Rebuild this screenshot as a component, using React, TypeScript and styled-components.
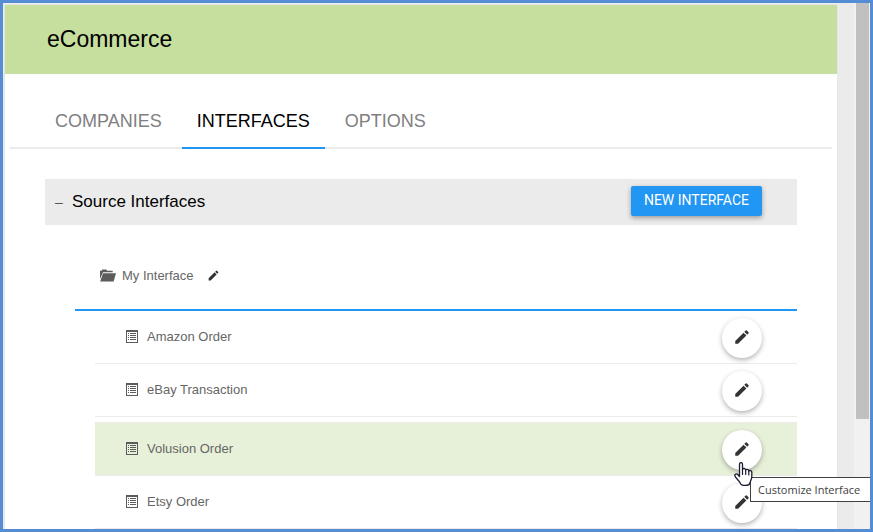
import React from 'react';
import styled, { createGlobalStyle } from 'styled-components';
import { MdEdit } from 'react-icons/md';

const GlobalStyle = createGlobalStyle`
  * { box-sizing: border-box; }
  body {
    margin: 0;
    background: #fff;
    font-family: "Liberation Sans", Arial, sans-serif;
  }
  button { font-family: inherit; border: 0; padding: 0; background: none; cursor: pointer; }
`;

const Frame = styled.div`
  display: flex;
  min-height: 100vh;
  border: 3px solid #548dd4;
  background: #ebebeb;
  overflow: hidden;
`;

const Page = styled.main`
  flex: 1;
  min-width: 0;
  margin: 2px 17px 0 2px;
  background: #fff;
  box-shadow: 0 0 1px #ccc;
`;

const ScrollTrack = styled.div`
  width: 16px;
  padding: 0 1px 0 2px;
  background: #f1f1f1;
`;

const ScrollThumb = styled.div`
  height: 79%;
  background: #c0c0c0;
`;

const Header = styled.header`
  display: flex;
  align-items: center;
  height: 69px;
  padding: 0 42px 2px;
  background: #c6df9f;
`;

const Title = styled.h1`
  margin: 0;
  font-size: 23px;
  line-height: 28px;
  font-weight: 400;
  color: #000;
`;

const Tabs = styled.nav`
  display: flex;
  gap: 5px;
  margin: 18px 5px 0;
  padding: 0 30px;
  box-shadow: inset 0 -2px #ebebeb;
`;

const Tab = styled.button<{ $active?: boolean }>`
  height: 57px;
  padding: 2px 15px 0;
  border-bottom: 2px solid ${(p) => (p.$active ? '#2196f3' : 'transparent')};
  font-size: 18px;
  line-height: 24px;
  color: ${(p) => (p.$active ? '#000' : '#808080')};
`;

const Section = styled.section`
  margin: 30px 40px 0;
`;

const SectionBar = styled.div`
  display: flex;
  align-items: center;
  justify-content: space-between;
  height: 46px;
  padding: 0 35px 2px 10px;
  background: #ebebeb;
`;

const SectionToggle = styled.button`
  display: flex;
  align-items: center;
  gap: 9px;
  padding-top: 2px;
  font-size: 17px;
  line-height: 20px;
  color: #000;
`;

const Dash = styled.span`
  width: 8px;
  font-size: 14px;
  color: #555;
`;

const PrimaryButton = styled.button`
  height: 30px;
  padding: 0 13px 2px;
  border-radius: 2px;
  background: #2196f3;
  color: #fff;
  font-family: Roboto, sans-serif;
  font-size: 14px;
  line-height: 20px;
  box-shadow: 0 2px 5px rgba(0, 0, 0, 0.35);
`;

const Group = styled.div`
  margin-left: 30px;
`;

const GroupHeader = styled.div`
  display: flex;
  align-items: center;
  height: 86px;
  padding: 16px 24px 0;
  border-bottom: 2px solid #2196f3;
  color: #666;
  font-size: 13px;
`;

const GroupName = styled.span`
  margin: 0 13px 0 6px;
`;

const SmallEdit = styled.button`
  display: flex;
  color: #333;
`;

const List = styled.ul`
  margin: 0 0 0 20px;
  padding: 0;
  list-style: none;
`;

const Row = styled.li<{ $highlighted?: boolean }>`
  display: flex;
  align-items: center;
  height: ${(p) => (p.$highlighted ? 54 : 53)}px;
  margin-top: ${(p) => (p.$highlighted ? 5 : 0)}px;
  padding: 0 35px 0 31px;
  border-top: ${(p) => (p.$highlighted ? '1px solid #ebebeb' : '0')};
  border-bottom: 1px solid #ebebeb;
  background: ${(p) => (p.$highlighted ? '#e7f1d9' : 'transparent')};
`;

const RowName = styled.span`
  flex: 1;
  margin-left: 9px;
  font-size: 13px;
  line-height: 18px;
  color: #666;
`;

const Action = styled.div`
  position: relative;
  padding-top: 2px;
`;

const RoundButton = styled.button`
  display: flex;
  justify-content: center;
  width: 40px;
  height: 40px;
  padding-top: 10px;
  border-radius: 50%;
  background: #fff;
  color: #333;
  box-shadow: 0 2px 5px rgba(0, 0, 0, 0.3);
`;

const Tooltip = styled.div`
  position: absolute;
  z-index: 2;
  left: 28px;
  top: 49px;
  padding: 4px 12px 3px 7px;
  border: 1px solid #404040;
  background: #fff;
  color: #404040;
  font-family: "Open Sans", "Noto Sans", sans-serif;
  font-size: 11px;
  line-height: 16px;
  white-space: nowrap;
`;

const Pointer = styled.svg`
  position: absolute;
  z-index: 3;
  left: 12px;
  top: 34px;
`;

const FolderIcon = () => (
  <svg width="17" height="13" viewBox="0 0 17 13" fill="#5c5c5c" aria-hidden="true">
    <path d="M1 10V1.8h1.5L3.2.5h4.2l.7 1.3h5.6v1.4H4L1 10Z" />
    <path d="M4 4.2H17l-2.4 8.3H1.2Z" />
  </svg>
);

const ListGlyph = styled.svg`
  margin-bottom: 2px;
`;

const ListIcon = () => (
  <ListGlyph width="12" height="13" viewBox="0 0 12 13" fill="#5c5c5c" aria-hidden="true">
    <path fillRule="evenodd" d="M0 0h12v13H0ZM1 2v10h10V2Z" />
    <path d="M2 3h1v1H2ZM4 3h6v1H4ZM2 5h1v1H2ZM4 5h6v1H4ZM2 7h1v1H2ZM4 7h6v1H4ZM2 9h1v1H2ZM4 9h6v1H4Z" />
  </ListGlyph>
);

const HandPointer = () => (
  <Pointer width="19" height="25" viewBox="0 0 19 25" aria-hidden="true">
    <path
      d="M5.5 14.5V2.4C5.5 0 8.5 0 8.5 2.4V7.4C9 6 11.5 6.2 11.7 8C12.4 6.9 14.6 7.3 14.8 9C15.6 8 17.8 8.5 17.8 10.3V15C17.8 17.4 16.2 18.7 16 21C15.3 24.3 6.9 24.2 6.1 20.8C5 18.5 1.1 15.7.8 13.7C.5 12 2.6 11.3 3.9 12.7Z"
      fill="#fff"
      stroke="#1c1c30"
      strokeWidth="1.3"
      strokeLinejoin="round"
    />
    <path d="M8.5 7v5.5M11.7 8v4.5M14.8 9v4" fill="none" stroke="#1c1c30" strokeWidth="1.2" strokeLinecap="round" />
  </Pointer>
);

const tabs = ['COMPANIES', 'INTERFACES', 'OPTIONS'];

const interfaces = [
  { name: 'Amazon Order' },
  { name: 'eBay Transaction' },
  { name: 'Volusion Order', highlighted: true },
  { name: 'Etsy Order' },
];

export default function App() {
  return (
    <>
      <GlobalStyle />
      <Frame>
        <Page>
          <Header>
            <Title>eCommerce</Title>
          </Header>
          <Tabs>
            {tabs.map((tab) => (
              <Tab key={tab} $active={tab === 'INTERFACES'}>{tab}</Tab>
            ))}
          </Tabs>
          <Section>
            <SectionBar>
              <SectionToggle aria-expanded="true">
                <Dash>–</Dash>
                Source Interfaces
              </SectionToggle>
              <PrimaryButton>NEW INTERFACE</PrimaryButton>
            </SectionBar>
            <Group>
              <GroupHeader>
                <FolderIcon />
                <GroupName>My Interface</GroupName>
                <SmallEdit aria-label="Rename My Interface">
                  <MdEdit size={13} />
                </SmallEdit>
              </GroupHeader>
              <List>
                {interfaces.map(({ name, highlighted }) => (
                  <Row key={name} $highlighted={highlighted}>
                    <ListIcon />
                    <RowName>{name}</RowName>
                    <Action>
                      <RoundButton aria-label={`Customize ${name}`}>
                        <MdEdit size={18} />
                      </RoundButton>
                      {highlighted && (
                        <>
                          <Tooltip role="tooltip">Customize Interface</Tooltip>
                          <HandPointer />
                        </>
                      )}
                    </Action>
                  </Row>
                ))}
              </List>
            </Group>
          </Section>
        </Page>
        <ScrollTrack>
          <ScrollThumb />
        </ScrollTrack>
      </Frame>
    </>
  );
}
